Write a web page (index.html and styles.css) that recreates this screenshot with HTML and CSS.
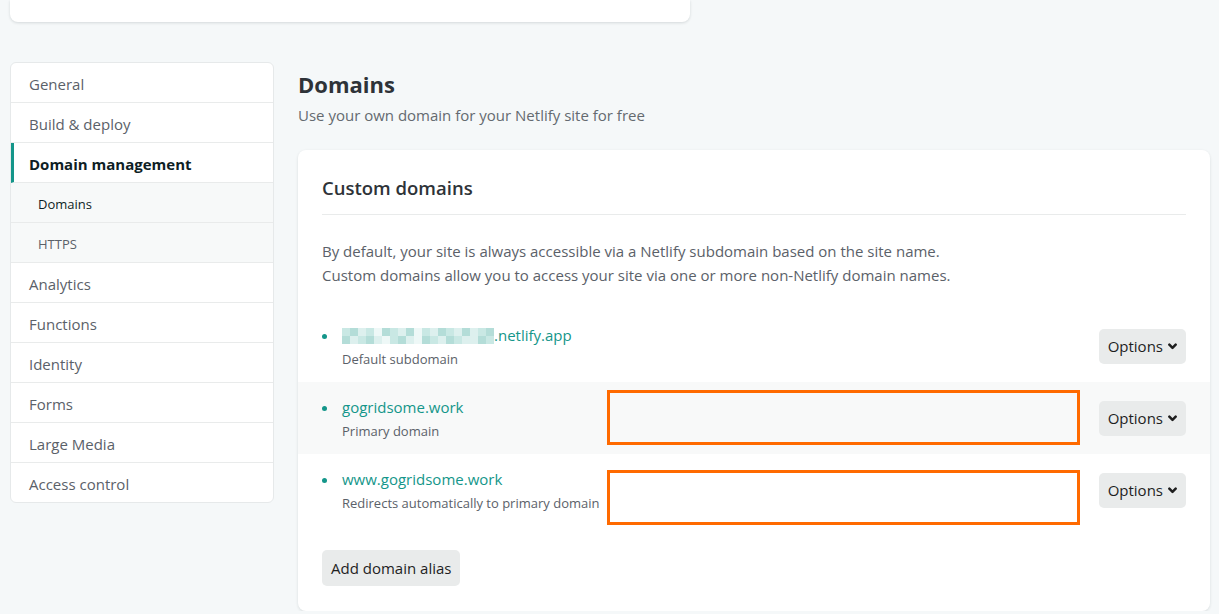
FILE: index.html
```html
<!DOCTYPE html>
<html lang="en">
<head>
<meta charset="utf-8">
<title>Domain management</title>
<link rel="stylesheet" href="styles.css">
</head>
<body>
<div class="topcard"></div>
<div class="layout">
  <nav class="sidebar">
    <a class="nav-item">General</a>
    <a class="nav-item">Build &amp; deploy</a>
    <a class="nav-item active">Domain management</a>
    <a class="nav-item sub">Domains</a>
    <a class="nav-item sub muted">HTTPS</a>
    <a class="nav-item">Analytics</a>
    <a class="nav-item">Functions</a>
    <a class="nav-item">Identity</a>
    <a class="nav-item">Forms</a>
    <a class="nav-item">Large Media</a>
    <a class="nav-item">Access control</a>
  </nav>
  <main class="main">
    <h1 class="page-title">Domains</h1>
    <p class="page-sub">Use your own domain for your Netlify site for free</p>
    <section class="card">
      <h2 class="card-title">Custom domains</h2>
      <p class="card-desc">By default, your site is always accessible via a Netlify subdomain based on the site name.<br>Custom domains allow you to access your site via one or more non-Netlify domain names.</p>
      <ul class="domains">
        <li class="domain">
          <div class="domain-info">
            <div class="domain-name"><span class="blur"><i class="c1"></i><i class="c2"></i><i class="c3"></i><i class="c1"></i><i class="c4"></i><i class="c2"></i><i class="c1"></i><i class="c3"></i><i class="c2"></i><i class="c4"></i><i class="c1"></i><i class="c3"></i><i class="c2"></i><i class="c1"></i><i class="c3"></i><i class="c2"></i><i class="c3"></i><i class="c1"></i><i class="c2"></i><i class="c2"></i><i class="c3"></i><i class="c1"></i><i class="c2"></i><i class="c3"></i><i class="c4"></i><i class="c1"></i><i class="c2"></i><i class="c3"></i><i class="c4"></i><i class="c2"></i><i class="c1"></i><i class="c3"></i><i class="c2"></i><i class="c1"></i><i class="c3"></i><i class="c3"></i><i class="c2"></i><i class="c1"></i></span>.netlify.app</div>
            <div class="domain-note">Default subdomain</div>
          </div>
          <button class="btn">Options <svg class="chev" viewBox="0 0 10 10" width="9" height="9"><path d="M1.5 3 L5 6.5 L8.5 3" fill="none" stroke="#1e1e1e" stroke-width="2.8" stroke-linecap="round" stroke-linejoin="round"/></svg></button>
        </li>
        <li class="domain alt">
          <div class="domain-info">
            <div class="domain-name">gogridsome.work</div>
            <div class="domain-note">Primary domain</div>
          </div>
          <div class="mark mark-a"></div>
          <button class="btn">Options <svg class="chev" viewBox="0 0 10 10" width="9" height="9"><path d="M1.5 3 L5 6.5 L8.5 3" fill="none" stroke="#1e1e1e" stroke-width="2.8" stroke-linecap="round" stroke-linejoin="round"/></svg></button>
        </li>
        <li class="domain">
          <div class="domain-info">
            <div class="domain-name">www.gogridsome.work</div>
            <div class="domain-note">Redirects automatically to primary domain</div>
          </div>
          <div class="mark mark-b"></div>
          <button class="btn">Options <svg class="chev" viewBox="0 0 10 10" width="9" height="9"><path d="M1.5 3 L5 6.5 L8.5 3" fill="none" stroke="#1e1e1e" stroke-width="2.8" stroke-linecap="round" stroke-linejoin="round"/></svg></button>
        </li>
      </ul>
      <button class="btn add">Add domain alias</button>
    </section>
  </main>
</div>
</body>
</html>
```
FILE: styles.css
```css
* { box-sizing: border-box; }
body {
  margin: 0;
  background: #f5f8f9;
  font-family: "Open Sans", "Noto Sans", sans-serif;
  color: #2e3338;
  overflow: hidden;
}
.topcard {
  margin-left: 10px;
  width: 680px;
  height: 22px;
  background: #fff;
  border-radius: 0 0 8px 8px;
  box-shadow: 0 1px 3px rgba(14, 30, 37, 0.14);
}
.layout {
  display: flex;
  gap: 24px;
  padding: 40px 9px 0 10px;
}
.sidebar {
  flex: 0 0 264px;
  align-self: flex-start;
  display: flex;
  flex-direction: column;
  background: #fff;
  border: 1px solid #e6e9ea;
  border-radius: 6px;
  overflow: hidden;
}
.nav-item {
  height: 40px;
  display: flex;
  align-items: center;
  padding-left: 18px;
  padding-top: 2px;
  font-size: 15px;
  color: #5b6169;
  border-bottom: 1px solid #e9ebeb;
}
.nav-item:last-child { border-bottom: none; height: 39px; }
.nav-item.active {
  color: #0e1e25;
  font-weight: 700;
  border-left: 3px solid #14968a;
  padding-left: 15px;
}
.nav-item.sub {
  background: #f7f9f9;
  padding-left: 27px;
  font-size: 13px;
  color: #0e1e25;
}
.nav-item.sub.muted { color: #5b6169; }
.main {
  flex: 1;
  min-width: 0;
}
.page-title {
  margin: 8px 0 0;
  font-size: 22px;
  font-weight: 700;
  line-height: 28px;
  color: #2e3338;
}
.page-sub {
  margin: 6px 0 0;
  font-size: 15px;
  line-height: 22px;
  color: #646a70;
}
.card {
  margin-top: 24px;
  background: #fff;
  border-radius: 8px;
  box-shadow: 0 1px 3px rgba(14, 30, 37, 0.12);
  padding: 24px 0 25px;
}
.card-title {
  margin: 0 24px;
  padding-bottom: 12px;
  font-size: 18.5px;
  font-weight: 600;
  line-height: 28px;
  color: #2e3338;
  border-bottom: 1px solid #e9ebeb;
}
.card-desc {
  margin: 24px 24px 0;
  font-size: 15px;
  line-height: 24px;
  color: #5b6169;
}
.domains {
  list-style: none;
  margin: 23px 0 0;
  padding: 0;
}
.domain {
  position: relative;
  height: 72px;
  display: flex;
  align-items: center;
  justify-content: space-between;
  padding: 0 24px;
}
.domain.alt { background: #f8f9f9; }
.domain-info {
  position: relative;
  padding-left: 20px;
  align-self: flex-start;
  padding-top: 14px;
}
.domain-info::before {
  content: "";
  position: absolute;
  left: 0;
  top: 24px;
  width: 5px;
  height: 5px;
  border-radius: 50%;
  background: #14968a;
}
.domain-name {
  display: flex;
  align-items: center;
  font-size: 15px;
  line-height: 22px;
  color: #14968a;
}
.domain-note {
  margin-top: 3px;
  font-size: 13px;
  line-height: 20px;
  color: #5b6169;
}
.blur {
  display: grid;
  grid-template-columns: repeat(19, 8px);
  grid-template-rows: 8px 8px;
  width: 152px;
  margin-top: 2px;
}
.blur i { display: block; }
.blur .c1 { background: #c9e8e4; }
.blur .c2 { background: #b4ddd8; }
.blur .c3 { background: #ddf0ee; }
.blur .c4 { background: #eef8f7; }
.btn {
  font-family: "Open Sans", "Noto Sans", sans-serif;
  font-size: 15px;
  color: #1e1e1e;
  background: #e9ebeb;
  border: none;
  border-radius: 5px;
  height: 35px;
  padding: 0 9px;
  display: inline-flex;
  align-items: center;
  gap: 5px;
}
.chev { margin-top: 1px; }
.mark {
  position: absolute;
  left: 309px;
  width: 473px;
  height: 55px;
  border: 3px solid #ff6a00;
}
.mark-a { top: 8px; }
.mark-b { top: 16px; }
.btn.add {
  margin: 24px 0 0 24px;
  height: 36px;
}
```
